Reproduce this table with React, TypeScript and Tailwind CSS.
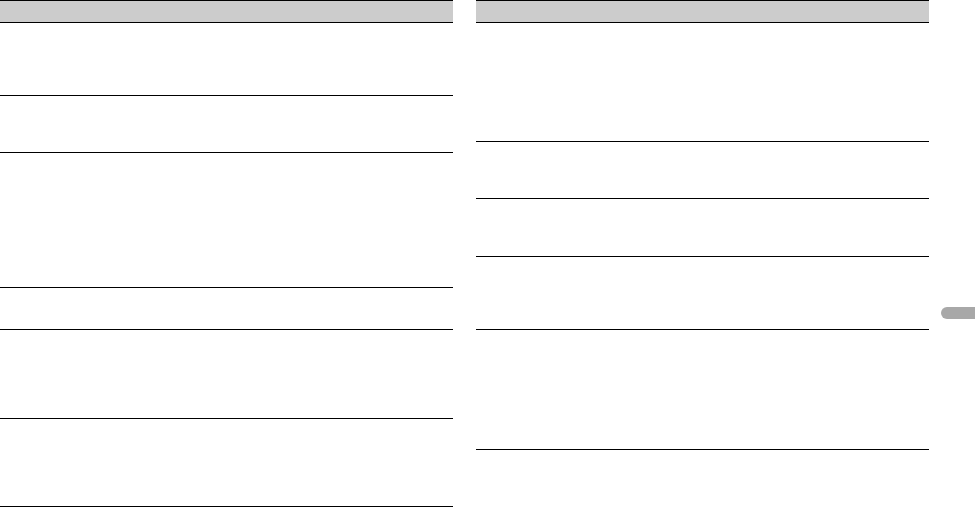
const leftRows = ['h-[73px]', 'h-[57px]', 'h-[135px]', 'h-[42px]', 'h-[89px]', 'h-[88px]'];
const rightRows = ['h-[119px]', 'h-[57px]', 'h-[58px]', 'h-[73px]', 'h-[120px]'];

function Table({ rows }: { rows: string[] }) {
  return (
    <div className="w-[453px] flex flex-col">
      {/* header bar */}
      <div className="h-[23px] bg-[#cccccc] border-y border-black" />
      {rows.map((h, i) => (
        <div key={i} className={`${h} border-b border-black`} />
      ))}
    </div>
  );
}

export default function App() {
  return (
    <div className="w-[975px] h-[507px] bg-white flex overflow-hidden font-['Liberation_Sans',sans-serif]">
      <Table rows={leftRows} />
      <div className="ml-[23px]">
        <Table rows={rightRows} />
      </div>
      <div className="ml-auto w-[34px] flex flex-col">
        <div className="mt-[307px] h-[12px] bg-[#a8a8a8] rounded-l-full" />
      </div>
    </div>
  );
}
